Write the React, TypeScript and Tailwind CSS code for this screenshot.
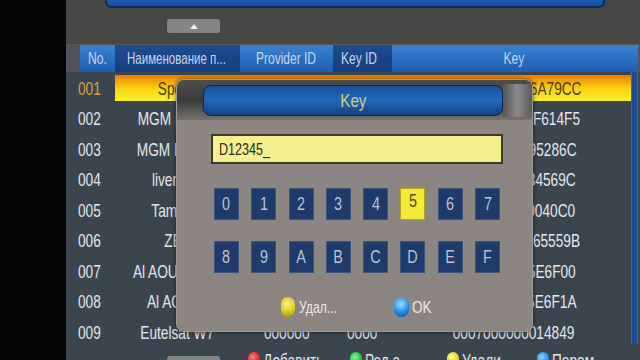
import React from "react";

const rows = [
  { n: "001", name: "Sport1", pid: "000000", kid: "0000", key: "1A2B3C4D5E6A79CC" },
  { n: "002", name: "MGM Movies", pid: "000000", kid: "0000", key: "0A1B2C3D4EF614F5" },
  { n: "003", name: "MGM Europe", pid: "000000", kid: "0000", key: "11223344AB95286C" },
  { n: "004", name: "liverpool", pid: "000000", kid: "0000", key: "00112233FF34569C" },
  { n: "005", name: "Tamil TV", pid: "000000", kid: "0000", key: "12345678900040C0" },
  { n: "006", name: "ZBC", pid: "000000", kid: "0000", key: "A1B2C3D4E565559B" },
  { n: "007", name: "Al AOULA Inter", pid: "000000", kid: "0000", key: "112233445E5E6F00" },
  { n: "008", name: "Al AOULA", pid: "000000", kid: "0000", key: "112233445E5E6F1A" },
  { n: "009", name: "Eutelsat W7", pid: "000000", kid: "0000", key: "0007000000014849" },
];

const keys1 = ["0", "1", "2", "3", "4", "5", "6", "7"];
const keys2 = ["8", "9", "A", "B", "C", "D", "E", "F"];

function N({ children, c = "scale-x-[0.74] origin-center" }: { children: React.ReactNode; c?: string }) {
  return <span className={"inline-block whitespace-nowrap " + c}>{children}</span>;
}

function KeyBtn({ k }: { k: string }) {
  const sel = k === "5";
  return (
    <div
      className={
        sel
          ? "w-[25px] h-[32px] flex items-center justify-center bg-[#f2ec38] border border-[#b5a420] text-[#5a4a10] text-[18px]"
          : "w-[25px] h-[32px] flex items-center justify-center bg-[#1e3b6c] border border-[#3b5478] text-[#b9c3d5] text-[18px]"
      }
    >
      <span className={sel ? "-mt-[7px] leading-none" : "leading-none"}>
        <N c="scale-x-[0.8] origin-center">{k}</N>
      </span>
    </div>
  );
}

export default function App() {
  return (
    <div className="w-[640px] h-[360px] relative overflow-hidden bg-black flex font-['Liberation_Sans',Arial,sans-serif]">
      <div className="w-[66px] h-full shrink-0 bg-[#050505]" />
      <div className="w-[574px] h-full shrink-0 flex flex-col bg-[#3b454e]">
        {/* top area */}
        <div className="h-[45px] shrink-0 bg-[#474846] flex flex-col border-b border-[#55575a]">
          <div className="ml-[39px] w-[500px] h-[8px] shrink-0 rounded-b-[6px] bg-gradient-to-b from-[#1d5fb4] to-[#164a92] border-b-2 border-x-2 border-[#0e2c58]" />
          <div className="ml-[101px] mt-[11px] w-[53px] h-[14px] shrink-0 rounded-[3px] bg-[#858683] flex items-center justify-center">
            <div className="w-0 h-0 border-l-[4px] border-r-[4px] border-b-[5px] border-l-transparent border-r-transparent border-b-[#f0f0f0]" />
          </div>
        </div>
        {/* header */}
        <div className="h-[27px] shrink-0 flex text-[16px] leading-none text-[#c9d5ea] bg-[#50545a]">
          <div className="w-[14px]" />
          <div className="w-[35px] flex items-center justify-center bg-gradient-to-b from-[#3a82d4] to-[#1f5cae]">
            <N c="scale-x-[0.75] origin-center">No.</N>
          </div>
          <div className="w-[125px] flex items-center pl-[12px] bg-gradient-to-b from-[#1c4c92] to-[#163e7c]">
            <N c="scale-x-[0.72] origin-left">Наименование п...</N>
          </div>
          <div className="w-[93px] flex items-center justify-center bg-gradient-to-b from-[#3a82d4] to-[#1f5cae]">
            <N c="scale-x-[0.75] origin-center">Provider ID</N>
          </div>
          <div className="w-[59px] flex items-center pl-[8px] bg-gradient-to-b from-[#1c4c92] to-[#163e7c]">
            <N c="scale-x-[0.75] origin-left">Key ID</N>
          </div>
          <div className="w-[246px] flex items-center justify-center pr-[2px] bg-gradient-to-b from-[#3a82d4] to-[#1f5cae]">
            <N c="scale-x-[0.75] origin-center">Key</N>
          </div>
        </div>
        {/* body */}
        <div className="flex shrink-0">
          <div className="w-[565px] flex flex-col pt-[1px]">
            {rows.map((r, i) => {
              const sel = i === 0;
              return (
                <div key={r.n} className="h-[30.5px] shrink-0 flex items-center text-[19px] leading-none">
                  <div className="w-[12px]" />
                  <div className={"w-[37px] " + (sel ? "text-[#d9a23c]" : "text-[#e2e6ee]")}>
                    <N c="scale-x-[0.72] origin-left">{r.n}</N>
                  </div>
                  <div
                    className={
                      "flex-1 h-[26px] flex items-center " +
                      (sel
                        ? "bg-gradient-to-b from-[#ee7a06] via-[#f7d010] to-[#f8f428] text-[#4c3c06]"
                        : "text-[#e2e6ee]")
                    }
                  >
                    <div className="w-[125px] text-center">
                      <N c="scale-x-[0.72] origin-center">{r.name}</N>
                    </div>
                    <div className="w-[93px] text-center">
                      <N c="scale-x-[0.72] origin-center">{r.pid}</N>
                    </div>
                    <div className="w-[59px] text-center">
                      <N c="scale-x-[0.72] origin-center">{r.kid}</N>
                    </div>
                    <div className="w-[239px] text-center pl-[4px]">
                      <N c="scale-x-[0.72] origin-center">{r.key}</N>
                    </div>
                  </div>
                </div>
              );
            })}
          </div>
          <div className="w-[7px] h-[272px] bg-[#1d4f98] border-x border-[#2f6cc0]" />
        </div>
        {/* legend */}
        <div className="flex shrink-0 items-start mt-[4px] text-[19px] leading-none text-[#e2e6ee]">
          <div className="ml-[101px] mt-[4px] w-[53px] h-[14px] rounded-[3px] bg-[#858683]" />
          <div className="ml-[28px] w-[102px] flex items-start">
            <div className="w-[12px] h-[15px] rounded-full bg-[radial-gradient(circle_at_40%_35%,#ff8080,#e01818_60%,#901010)]" />
            <span className="ml-[3px] -mt-[1px]">
              <N c="scale-x-[0.72] origin-left">Добавить</N>
            </span>
          </div>
          <div className="w-[97px] flex items-start">
            <div className="w-[12px] h-[15px] rounded-full bg-[radial-gradient(circle_at_40%_35%,#80ff90,#20b030_60%,#106018)]" />
            <span className="ml-[3px] -mt-[1px]">
              <N c="scale-x-[0.72] origin-left">Ред.а</N>
            </span>
          </div>
          <div className="w-[90px] flex items-start">
            <div className="w-[12px] h-[15px] rounded-full bg-[radial-gradient(circle_at_40%_35%,#ffff90,#d8d020_60%,#807808)]" />
            <span className="ml-[3px] -mt-[1px]">
              <N c="scale-x-[0.72] origin-left">Удали</N>
            </span>
          </div>
          <div className="flex items-start">
            <div className="w-[12px] h-[15px] rounded-full bg-[radial-gradient(circle_at_40%_35%,#90d0ff,#2080e0_60%,#104080)]" />
            <span className="ml-[3px] -mt-[1px]">
              <N c="scale-x-[0.72] origin-left">Перем.</N>
            </span>
          </div>
        </div>
      </div>

      {/* dialog */}
      <div className="absolute left-[176px] top-[79px] w-[357px] h-[253px] rounded-[8px] bg-[#8b8681] border border-[#a09a94] shadow-[0_0_4px_rgba(0,0,0,0.6)] flex flex-col overflow-hidden">
        <div className="h-[40px] shrink-0 bg-gradient-to-b from-[#4e4e4c] via-[#3a3a3a] to-[#76736f] flex">
          <div className="ml-[26px] mt-[5px] w-[300px] h-[31px] rounded-[8px] bg-gradient-to-b from-[#1a4f9c] via-[#2468bc] to-[#153f82] border border-[#0c2650] flex items-center justify-center text-[19px] leading-none text-[#c9d27c]">
            <N c="scale-x-[0.8] origin-center">Key</N>
          </div>
          <div className="flex-1 mt-[4px] h-[33px] bg-gradient-to-r from-[#555] via-[#8a8a88] to-[#5a5a58]" />
        </div>
        <div className="ml-[34px] mt-[14px] w-[292px] h-[30px] shrink-0 bg-[#f5f08e] border-2 border-[#3b3a22] flex items-center pl-[6px] text-[17px] leading-none text-[#2a2a22]">
          <N c="scale-x-[0.74] origin-left">D12345_</N>
        </div>
        <div className="ml-[37px] mt-[24px] shrink-0 grid grid-cols-[repeat(8,25px)] gap-x-[12.3px] gap-y-[21px]">
          {keys1.map((k) => (
            <KeyBtn key={k} k={k} />
          ))}
          {keys2.map((k) => (
            <KeyBtn key={k} k={k} />
          ))}
        </div>
        <div className="mt-[24px] shrink-0 flex items-center text-[17px] leading-none text-[#eceaf2]">
          <div className="ml-[104px] w-[14px] h-[20px] rounded-full bg-[radial-gradient(circle_at_45%_35%,#fbf590,#d8cc18_55%,#8a8008)]" />
          <span className="ml-[4px] w-[60px]">
            <N c="scale-x-[0.72] origin-left">Удал...</N>
          </span>
          <div className="ml-[35px] w-[15px] h-[20px] rounded-full bg-[radial-gradient(circle_at_45%_35%,#a0e0ff,#1e8ae8_55%,#0c4890)]" />
          <span className="ml-[3px]">
            <N c="scale-x-[0.8] origin-left">OK</N>
          </span>
        </div>
      </div>
    </div>
  );
}
